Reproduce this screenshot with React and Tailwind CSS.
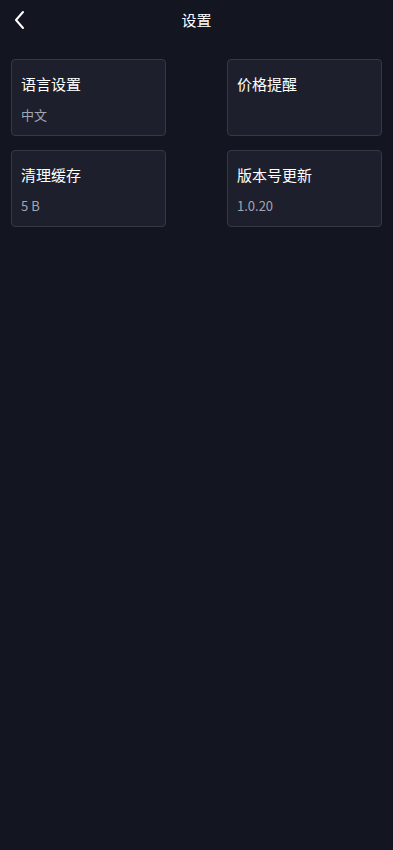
import React from 'react';

const items = [
  { title: '语言设置', value: '中文' },
  { title: '价格提醒', value: '' },
  { title: '清理缓存', value: '5 B' },
  { title: '版本号更新', value: '1.0.20' },
];

export default function App() {
  return (
    <div
      className="min-h-[850px] bg-[#131520] text-white"
      style={{ fontFamily: '"Noto Sans CJK SC", "Noto Sans", sans-serif' }}
    >
      <div className="relative h-10 flex items-center justify-center">
        <button className="absolute left-[12px] top-[10px] text-white">
          <svg width="16" height="20" viewBox="0 0 16 20" fill="none" stroke="currentColor" strokeWidth="2" strokeLinecap="round" strokeLinejoin="round">
            <path d="M11 2 L4 10 L11 18" />
          </svg>
        </button>
        <span className="text-[15px] leading-5">设置</span>
      </div>

      <div className="grid grid-cols-2 gap-x-[61px] gap-y-[14px] px-[11px] mt-[19px]">
        {items.map((it) => (
          <div
            key={it.title}
            className="h-[77px] rounded-[4px] border border-[#363845] bg-[#1d1f2c] px-[9px] pt-[14px]"
          >
            <div className="text-[15px] leading-5 text-white">{it.title}</div>
            {it.value && (
              <div className="mt-[11px] text-[13px] leading-5 text-[#a3a6b0]">{it.value}</div>
            )}
          </div>
        ))}
      </div>
    </div>
  );
}
